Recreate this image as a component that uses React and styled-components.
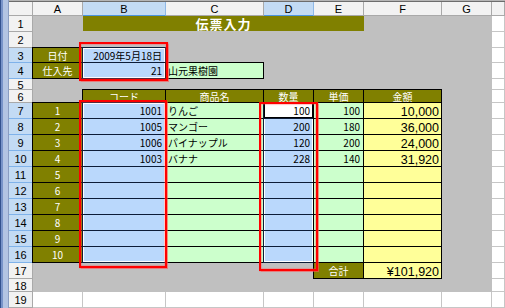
import React from "react";
import styled, { createGlobalStyle, css } from "styled-components";

const GRAY = "#c0c0c0";
const OLIVE = "#808000";
const TINT = "#bad8fc";
const GREEN = "#ccffcc";
const YELLOW = "#ffff99";
const GRID = "#c6c6c6";

const Global = createGlobalStyle`
  html, body { margin: 0; padding: 0; background: #fff; overflow: hidden; }
  body { font-family: "Noto Sans CJK JP", sans-serif; }
`;

const Window = styled.div`
  position: relative;
  display: flex;
  width: 505px;
  height: 308px;
  overflow: hidden;
  background: #fff;
`;

const Frame = styled.div`
  flex: none;
  width: 9px;
  background: linear-gradient(to right, #34528f 0 1px, #7893c9 1px 3px, #b3c4e3 3px 8px, #8a9dc2 8px 9px);
`;

const Sheet = styled.div`
  flex: 1;
  min-width: 0;
  display: flex;
  flex-direction: column;
`;

const TopEdge = styled.div`
  height: 3px;
  background: linear-gradient(#b5b5b5 0 1px, #6c6c6c 1px 2px, #dcdcdc 2px 3px);
`;

const Grid = styled.div`
  display: grid;
  grid-template-columns: 24px 50px 83px 98px 50px 50px 78px 50px 1fr;
  grid-template-rows: 14px 16px 16px 15px 16px 11px 13px repeat(11, 16px) 13px 16px;
`;

const Head = styled.div`
  box-sizing: border-box;
  display: flex;
  align-items: center;
  justify-content: center;
  font: 11px "Liberation Sans", Arial, sans-serif;
  color: #000;
  background: ${(p) => (p.$on ? "#c3dbf4" : "#f2f2f2")};
  border-right: 1px solid ${(p) => (p.$on ? "#8fb8e6" : "#a9a9a9")};
  border-bottom: 1px solid ${(p) => (p.$on ? "#4b94e0" : "#a9a9a9")};
`;

const RowHead = styled(Head)`
  padding-top: 1px;
  border-right: 1px solid ${(p) => (p.$on ? "#3d8ee8" : "#a9a9a9")};
  border-bottom: 1px solid ${(p) => (p.$on ? "#7fb2ea" : "#a9a9a9")};
`;

const Gray = styled.div`
  background: ${GRAY};
`;

const Blank = styled.div`
  box-sizing: border-box;
  background: #fff;
  border-right: 1px solid ${GRID};
  border-bottom: 1px solid ${GRID};
`;

const Title = styled.div`
  grid-column: span 4;
  display: flex;
  align-items: center;
  justify-content: center;
  background: ${OLIVE};
  border-bottom: 1px solid ${GRAY};
  color: #fff;
  font-size: 13px;
  font-weight: 700;
  letter-spacing: 1px;
  line-height: 1;
`;

const selShadow = (sel, active) => {
  const s = [];
  if (active) s.push("inset 0 0 0 1px #000");
  if (sel) {
    if (sel.includes("t")) s.push("inset 0 1px #fff");
    if (sel.includes("b")) s.push("inset 0 -1px #fff");
    if (sel.includes("l")) s.push("inset 1px 0 #fff");
    if (sel.includes("r")) s.push("inset -1px 0 #fff");
  }
  return s.length ? s.join(", ") : "none";
};

const Box = styled.div`
  box-sizing: border-box;
  margin: -1px 0 0 -1px;
  display: flex;
  align-items: center;
  justify-content: ${(p) =>
    p.$align === "right" ? "flex-end" : p.$align === "center" ? "center" : "flex-start"};
  padding: 1px ${(p) => (p.$align === "right" ? "3px" : "2px")} 0 2px;
  background: ${(p) => p.$bg};
  color: ${(p) => (p.$bg === OLIVE ? "#fff" : "#000")};
  border: 1px solid ${(p) => (p.$sel ? "#0c1c38" : "#000")};
  box-shadow: ${(p) => selShadow(p.$sel, p.$active)};
  font-size: 10px;
  line-height: 1;
  white-space: nowrap;
  overflow: hidden;
  ${(p) =>
    p.$big &&
    css`
      font: 12.5px "Liberation Sans", Arial, sans-serif;
      padding-right: 2px;
      padding-top: 2px;
    `}
`;

const Mark = styled.div`
  position: absolute;
  left: ${(p) => p.$x}px;
  top: ${(p) => p.$y}px;
  width: ${(p) => p.$w}px;
  height: ${(p) => p.$h}px;
  box-sizing: border-box;
  border: 2px solid #ff0000;
  box-shadow: 0 0 1px 0.5px rgba(255, 80, 80, 0.6), inset 0 0 1px 0.5px rgba(255, 80, 80, 0.6);
  pointer-events: none;
`;

const items = [
  ["1001", "りんご", "100", "100", "10,000"],
  ["1005", "マンゴー", "200", "180", "36,000"],
  ["1006", "パイナップル", "120", "200", "24,000"],
  ["1003", "バナナ", "228", "140", "31,920"],
];

// the last column is cut off by the window, so its letter is not visible
const cols = ["A", "B", "C", "D", "E", "F", "G", ""];

function grays(n, key) {
  return Array.from({ length: n }, (_, i) => <Gray key={key + i} />);
}

function ItemRow({ i }) {
  const d = items[i] || ["", "", "", "", ""];
  const edge = i === 0 ? "tlr" : i === 9 ? "blr" : "lr";
  return (
    <>
      <RowHead $on>{i + 7}</RowHead>
      <Box $bg={OLIVE} $align="center">{i + 1}</Box>
      <Box $bg={TINT} $align="right" $sel={edge}>{d[0]}</Box>
      <Box $bg={GREEN} $align="left">{d[1]}</Box>
      <Box $bg={i === 0 ? "#fff" : TINT} $align="right" $sel={edge} $active={i === 0}>{d[2]}</Box>
      <Box $bg={GREEN} $align="right">{d[3]}</Box>
      <Box $bg={YELLOW} $align="right" $big>{d[4]}</Box>
      <Gray />
      <Blank />
    </>
  );
}

export default function App() {
  return (
    <>
      <Global />
      <Window>
        <Frame />
        <Sheet>
          <TopEdge />
          <Grid>
            <Head />
            {cols.map((c, i) => (
              <Head key={"h" + i} $on={c === "B" || c === "D"}>{c}</Head>
            ))}

            <RowHead>1</RowHead>
            <Gray />
            <Title>伝票入力</Title>
            {grays(2, "r1")}
            <Blank />

            <RowHead>2</RowHead>
            {grays(7, "r2")}
            <Blank />

            <RowHead $on>3</RowHead>
            <Box $bg={OLIVE} $align="center">日付</Box>
            <Box $bg={TINT} $align="right" $sel="tlr">2009年5月18日</Box>
            {grays(5, "r3")}
            <Blank />

            <RowHead $on>4</RowHead>
            <Box $bg={OLIVE} $align="center">仕入先</Box>
            <Box $bg={TINT} $align="right" $sel="blr">21</Box>
            <Box $bg={GREEN} $align="left">山元果樹園</Box>
            {grays(4, "r4")}
            <Blank />

            <RowHead>5</RowHead>
            {grays(7, "r5")}
            <Blank />

            <RowHead>6</RowHead>
            <Gray />
            <Box $bg={OLIVE} $align="center">コード</Box>
            <Box $bg={OLIVE} $align="center">商品名</Box>
            <Box $bg={OLIVE} $align="center">数量</Box>
            <Box $bg={OLIVE} $align="center">単価</Box>
            <Box $bg={OLIVE} $align="center">金額</Box>
            <Gray />
            <Blank />

            {Array.from({ length: 10 }, (_, i) => (
              <ItemRow key={i} i={i} />
            ))}

            <RowHead>17</RowHead>
            {grays(4, "r17")}
            <Box $bg={OLIVE} $align="center">合計</Box>
            <Box $bg={YELLOW} $align="right" $big>¥101,920</Box>
            <Gray />
            <Blank />

            <RowHead>18</RowHead>
            {grays(7, "r18")}
            <Blank />

            <RowHead>19</RowHead>
            {cols.map((c, i) => (
              <Blank key={"r19" + i} />
            ))}
          </Grid>
        </Sheet>
        <Mark $x={79} $y={42} $w={89} $h={39} />
        <Mark $x={79} $y={100} $w={88} $h={168} />
        <Mark $x={259} $y={102} $w={59} $h={169} />
      </Window>
    </>
  );
}
